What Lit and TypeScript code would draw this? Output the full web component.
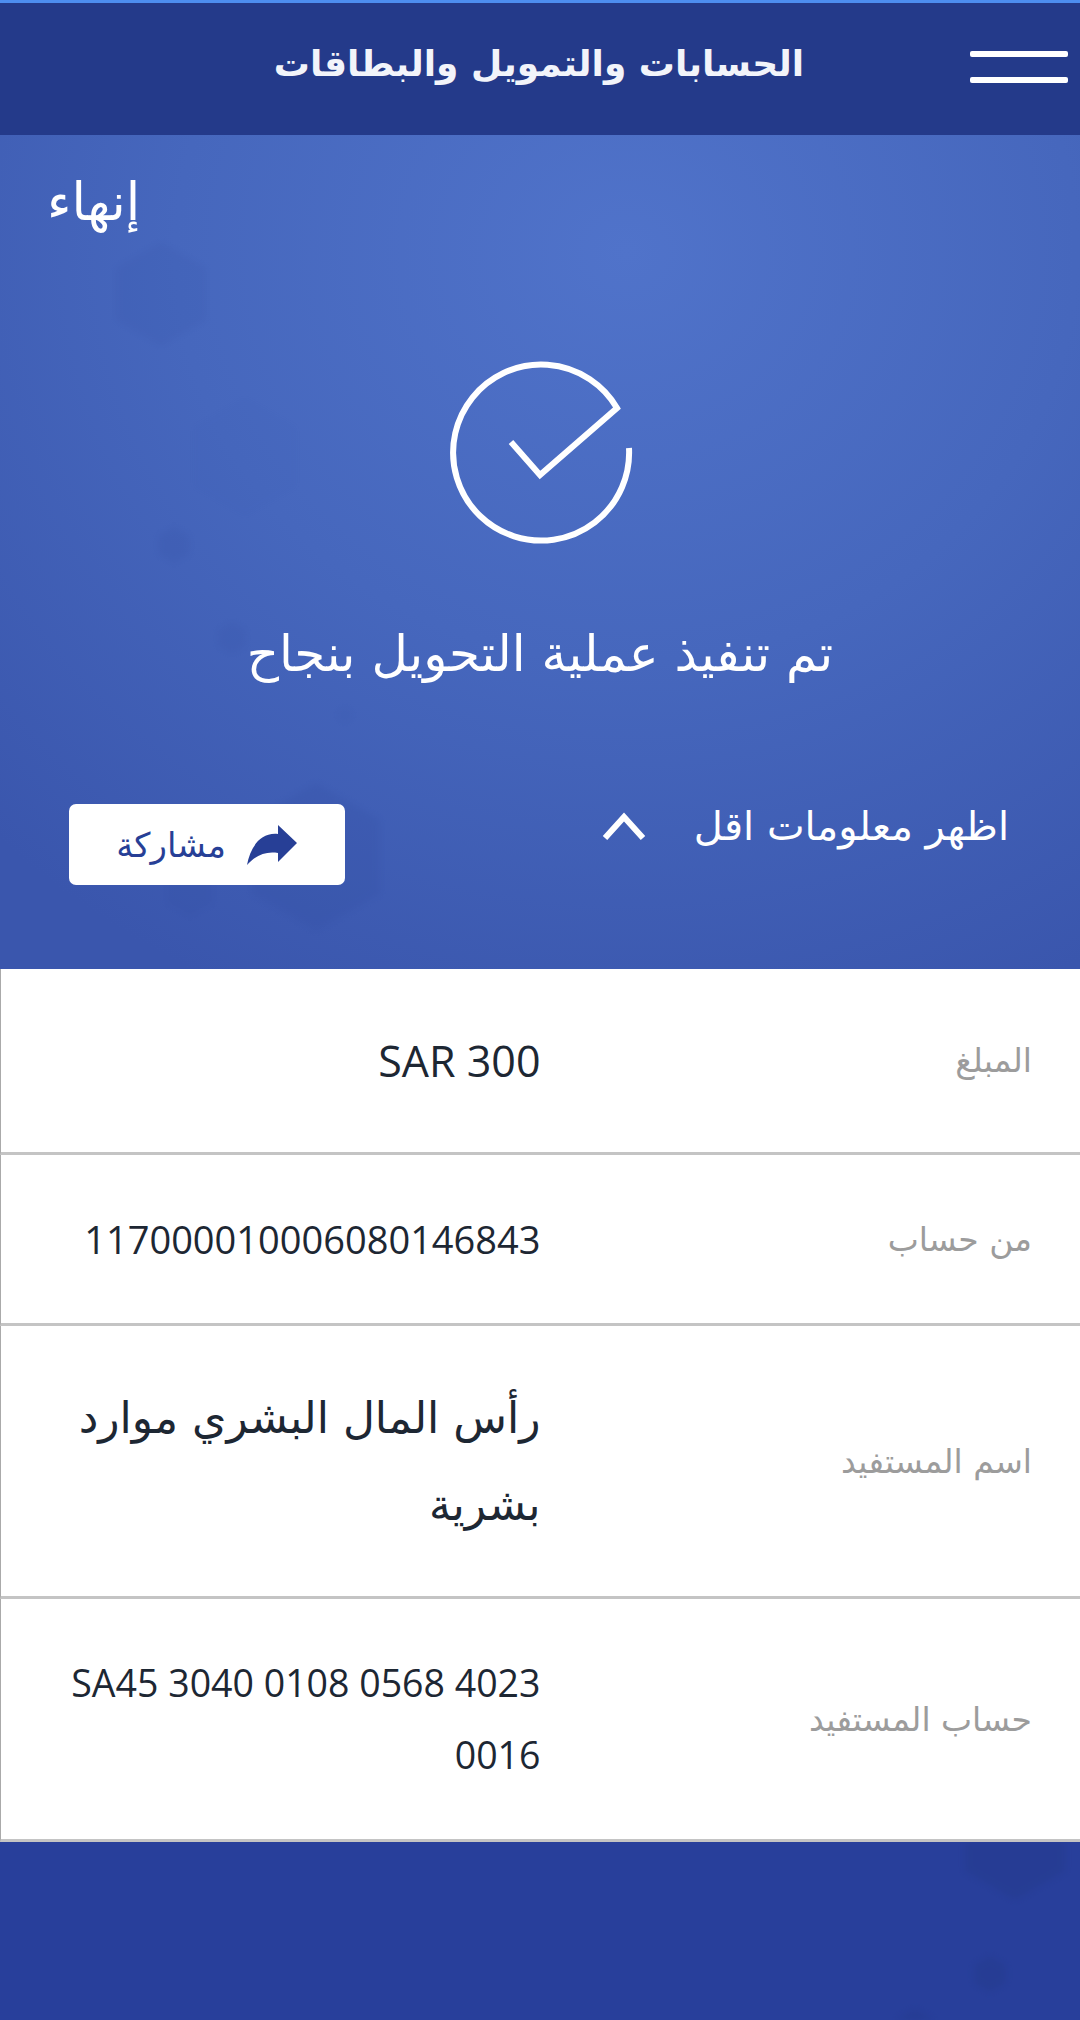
import { LitElement, html, css, svg } from "lit";
import { customElement } from "lit/decorators.js";

const hex = (cx: number, cy: number, r: number, alpha = 1) => {
  const pts = [30, 90, 150, 210, 270, 330]
    .map((a) => {
      const t = (a * Math.PI) / 180;
      return `${cx + r * Math.cos(t)},${cy + r * Math.sin(t)}`;
    })
    .join(" ");
  return svg`<polygon points=${pts} fill-opacity=${alpha} />`;
};

const rows = [
  { label: "المبلغ", value: "SAR 300", cls: "amount" },
  { label: "من حساب", value: "117000010006080146843", cls: "account" },
  { label: "اسم المستفيد", value: "رأس المال البشري موارد بشرية", cls: "name" },
  { label: "حساب المستفيد", value: "SA45 3040 0108 0568 4023 0016", cls: "iban" },
];

@customElement("app-root")
export class AppRoot extends LitElement {
  static styles = css`
    :host {
      display: block;
      width: 1080px;
      height: 2020px;
      overflow: hidden;
      background: #fff;
      font-family: "DejaVu Sans", "Noto Sans", sans-serif;
    }
    .topbar {
      height: 132px;
      border-top: 3px solid #4d8df0;
      background: #243a8a;
      display: flex;
      align-items: flex-start;
      justify-content: space-between;
      padding: 0 12px 0 0;
      box-sizing: content-box;
    }
    .title {
      margin: 37px 0 0 275px;
      width: 529px;
      text-align: center;
      color: #f2f4fa;
      font-size: 36px;
      line-height: 48px;
      font-weight: 700;
      white-space: nowrap;
    }
    .burger {
      width: 98px;
      margin-top: 48px;
      display: flex;
      flex-direction: column;
      gap: 20px;
    }
    .burger span {
      height: 6px;
      border-radius: 2px;
      background: #fff;
    }
    .hero {
      position: relative;
      height: 834px;
      box-sizing: border-box;
      background: radial-gradient(ellipse 900px 820px at 58% 14%, #5073ca 0%, #4667bd 50%, #3a56ad 100%);
      color: #fff;
      overflow: hidden;
    }
    .deco {
      position: absolute;
      inset: 0;
      width: 100%;
      height: 100%;
      fill: #2f4a9e;
      opacity: 0.16;
      filter: blur(3px);
    }
    .content {
      position: relative;
      height: 100%;
      display: flex;
      flex-direction: column;
    }
    .finish {
      margin: 42px 0 0 47px;
      align-self: flex-end;
      font-size: 52px;
      line-height: 50px;
    }
    .check {
      display: block;
      width: 190px;
      height: 190px;
      margin: 130px auto 0;
      padding-right: 3px;
      fill: none;
      stroke: #fff;
      stroke-width: 6;
    }
    .done {
      margin-top: 77px;
      text-align: center;
      font-size: 50px;
      line-height: 60px;
      white-space: nowrap;
    }
    .actions {
      margin-top: 120px;
      padding: 0 71px 0 69px;
      display: flex;
      justify-content: space-between;
      align-items: flex-start;
    }
    .more {
      display: flex;
      align-items: center;
      gap: 48px;
      margin-top: -3px;
      font-size: 40px;
      line-height: 50px;
      white-space: nowrap;
    }
    .more svg {
      width: 44px;
      height: 28px;
      fill: none;
      stroke: #fff;
      stroke-width: 6;
    }
    .share {
      width: 276px;
      height: 81px;
      border-radius: 7px;
      background: #fff;
      display: flex;
      align-items: center;
      justify-content: center;
      gap: 20px;
      color: #273f96;
      font-size: 34px;
    }
    .share svg {
      width: 52px;
      height: 42px;
      fill: #273f96;
    }
    .row {
      display: grid;
      grid-template-columns: 1fr 1fr;
      align-items: center;
      border-bottom: 3px solid #c4c4c4;
      border-left: 1px solid #aaa;
      box-sizing: border-box;
      background: #fff;
    }
    .row .label {
      padding-right: 48px;
      color: #9c9c9c;
      font-size: 33px;
    }
    .row .value {
      color: #1d2733;
      text-align: right;
      padding-left: 60px;
      font-family: "Open Sans", "DejaVu Sans", sans-serif;
    }
    .row.amount {
      height: 186px;
    }
    .row.account {
      height: 171px;
    }
    .row.name {
      height: 273px;
    }
    .row.iban {
      height: 243px;
    }
    .amount .value {
      font-size: 43px;
    }
    .account .value {
      font-size: 38px;
    }
    .name .value {
      font-family: "DejaVu Sans", sans-serif;
      font-size: 44px;
      line-height: 87px;
    }
    .iban .value {
      font-size: 37.5px;
      line-height: 72px;
    }
    .footer {
      position: relative;
      height: 178px;
      background: #283f9b;
      overflow: hidden;
    }
    .footer .deco {
      fill: #243a8a;
      opacity: 0.4;
    }
  `;

  render() {
    return html`
      <div class="topbar" dir="rtl">
        <div class="burger"><span></span><span></span></div>
        <div class="title">الحسابات والتمويل والبطاقات</div>
      </div>
      <section class="hero" dir="rtl">
        <svg class="deco" viewBox="0 0 1080 834">
          ${hex(161, 159, 52, 0.6)} ${hex(245, 322, 60, 0.12)}
          ${hex(174, 410, 18, 0.8)} ${hex(232, 503, 16, 0.7)}
          ${hex(345, 580, 8, 0.5)} ${hex(316, 722, 74, 1)}
          ${hex(190, 755, 26, 0.8)}
        </svg>
        <div class="content">
          <div class="finish">إنهاء</div>
          <svg class="check" viewBox="0 0 190 190">
            <path d="M185 91 A88 88 0 1 1 173 51 L96 118 L67 85" />
          </svg>
          <div class="done">تم تنفيذ عملية التحويل بنجاح</div>
          <div class="actions">
            <div class="more">
              <span>اظهر معلومات اقل</span>
              <svg viewBox="0 0 44 28"><path d="M3 26 L22 5 L41 26" /></svg>
            </div>
            <div class="share">
              <svg viewBox="0 0 52 42">
                <path
                  d="M1 41 C4 24 14 8 32 10 L32 1 L51 19 L32 38 L32 29 C20 27 10 31 1 41 Z"
                />
              </svg>
              <span>مشاركة</span>
            </div>
          </div>
        </div>
      </section>
      ${rows.map(
        (r) => html`
          <div class="row ${r.cls}" dir="rtl">
            <div class="label">${r.label}</div>
            <div class="value">${r.value}</div>
          </div>
        `,
      )}
      <div class="footer">
        <svg class="deco" viewBox="0 0 1080 178">
          ${hex(1015, 0, 58)} ${hex(990, 132, 18)} ${hex(915, 207, 40)}
        </svg>
      </div>
    `;
  }
}
